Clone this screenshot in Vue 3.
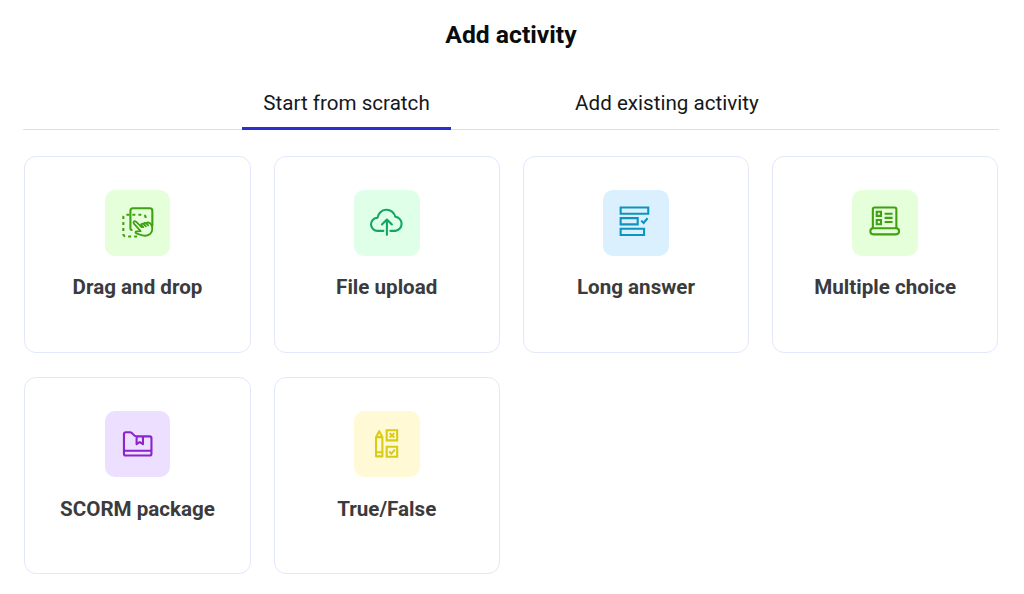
<template>
  <div class="add-activity">
    <h1 class="title">Add activity</h1>

    <div class="tabs" role="tablist">
      <button
        v-for="tab in tabs"
        :key="tab.id"
        class="tab"
        :class="{ active: activeTab === tab.id }"
        role="tab"
        @click="activeTab = tab.id"
      >
        {{ tab.label }}
      </button>
    </div>

    <div class="activity-grid">
      <div v-for="activity in activities" :key="activity.id" class="activity-card">
        <div class="activity-icon" :class="activity.id">
          <svg viewBox="0 0 66 66" fill="none" stroke="currentColor" stroke-width="2.1">
            <g v-if="activity.id === 'drag-drop'" stroke-linecap="round" stroke-linejoin="round">
              <path d="M26.7 40.1a1.5 1.5 0 0 1-1.2-1.5V20.8a2.5 2.5 0 0 1 2.5-2.5h17a2.5 2.5 0 0 1 2.5 2.5v15" />
              <path stroke-linecap="butt" stroke-dasharray="3 3" d="M40.7 28v-.8a2.3 2.3 0 0 0-2.3-2.3H20.7a2.3 2.3 0 0 0-2.3 2.3v17.2a2.3 2.3 0 0 0 2.3 2.3H34" />
              <path stroke-width="1.8" d="M36.7 37.2l-5.6-5.4c-1.6-1.4-3.4.5-2.1 2l6.8 7.5-4.1.1c-1.5.1-1.5 1.8-.2 2.2 3.3 1.1 6.1 2.4 9.1 2.3 4.1-.1 6.9-3.2 6.8-7.1 0-2.8-1.6-5.3-3.5-6.1-1.2-.5-2.3.1-2.2 1.1-1-1.4-3-1.1-3.1.5-1-1-2.4-.4-2.4.9zM36.6 35.2l1.8 2M39 34.3l2 2.1M41.7 33.8l1.6 1.7" />
            </g>
            <g v-else-if="activity.id === 'file-upload'" stroke-linecap="round" stroke-linejoin="round">
              <path d="M29.5 41H23.7A6.6 6.6 0 0 1 23.6 27.8A9.1 9.1 0 0 1 41.5 26.9A7.1 7.1 0 0 1 41.5 41H36.5" />
              <path d="M33 45V30.2M28 34.6l5-5 5 5" />
            </g>
            <g v-else-if="activity.id === 'long-answer'">
              <path d="M17.7 17.5h27.7v6.3H17.7zM17.7 28.2h17.1v6.3H17.7zM17.7 38.8h23.5v6.3H17.7z" />
              <path d="M38.4 30.7l2.3 2.4 4-4.8" />
            </g>
            <g v-else-if="activity.id === 'multiple-choice'" stroke-linejoin="round">
              <path d="M20.9 38V19.3a1.8 1.8 0 0 1 1.8-1.8h20a1.8 1.8 0 0 1 1.8 1.8V38" />
              <rect x="18.4" y="38.4" width="28.8" height="6.1" rx="3" />
              <path stroke-linejoin="miter" d="M24.8 21.8h4.3V26h-4.3zM24.8 30.1h4.3v4.2h-4.3zM32.7 23.9h8M32.7 28h8M32.7 32.1h8" />
            </g>
            <g v-else-if="activity.id === 'scorm'" stroke-linejoin="round">
              <path d="M19 42.8V23.3a2 2 0 0 1 2-2h4.2c2.7 0 3.1 4.2 6.5 4.2h13.1a1.8 1.8 0 0 1 1.8 1.8v15.5a1.8 1.8 0 0 1-1.8 1.8h-24a1.8 1.8 0 0 1-1.8-1.8zM19 39.9h27.6M31.7 25.5v7.8l3.1-2.2 3.3 2.2v-7.8" />
            </g>
            <g v-else>
              <path stroke-linejoin="round" d="M22.1 26.2l3.2-6 3.2 6v19.3h-6.4zM22.1 26.2h6.4M22.1 41.4h6.4" />
              <path d="M32.8 19.3h10.5v10.2H32.8zM32.8 35.9h10.5v10H32.8z" />
              <path stroke-width="2" d="M35.8 22.2l4.6 4.4M40.4 22.2l-4.6 4.4M35.3 40.6l2.2 2.2 3.5-4" />
            </g>
          </svg>
        </div>
        <span class="activity-name">{{ activity.name }}</span>
      </div>
    </div>
  </div>
</template>

<script setup>
import { ref } from 'vue'

const activeTab = ref('scratch')

const tabs = [
  { id: 'scratch', label: 'Start from scratch' },
  { id: 'existing', label: 'Add existing activity' }
]

const activities = [
  { id: 'drag-drop', name: 'Drag and drop' },
  { id: 'file-upload', name: 'File upload' },
  { id: 'long-answer', name: 'Long answer' },
  { id: 'multiple-choice', name: 'Multiple choice' },
  { id: 'scorm', name: 'SCORM package' },
  { id: 'true-false', name: 'True/False' }
]
</script>

<style>
body {
  background: #fff;
}
</style>

<style scoped>
.add-activity {
  box-sizing: border-box;
  height: 594px;
  padding: 19px 25px 0 23px;
  font-family: Roboto, sans-serif;
}

.title {
  margin: 0;
  text-align: center;
  font-size: 24.7px;
  line-height: 32px;
  font-weight: 700;
  color: #0b0c0f;
}

.tabs {
  display: flex;
  justify-content: center;
  gap: 103.6px;
  height: 53px;
  margin-top: 25px;
  border-bottom: 1px solid #dcdfe8;
}

.tab {
  box-sizing: border-box;
  height: 54px;
  padding: 2px 20.9px 0;
  background: none;
  border: none;
  border-bottom: 3px solid transparent;
  font-family: inherit;
  font-size: 20.6px;
  color: #15171a;
  cursor: pointer;
}

.tab.active {
  border-bottom-color: #2a2fd0;
}

.activity-grid {
  display: grid;
  grid-template-columns: repeat(4, 1fr);
  grid-auto-rows: 196.6px;
  gap: 24.9px 23px;
  margin: 26px 0.7px 0 1.4px;
}

.activity-card {
  box-sizing: border-box;
  display: flex;
  flex-direction: column;
  align-items: center;
  padding-top: 33px;
  border: 1px solid #e3e7fb;
  border-radius: 12px;
}

.activity-icon {
  width: 65.8px;
  height: 66px;
  border-radius: 10px;
}

.activity-icon svg {
  display: block;
}

.activity-name {
  margin-top: 17.4px;
  font-size: 20.6px;
  line-height: 28px;
  font-weight: 700;
  color: #3b3b3e;
}

.drag-drop,
.multiple-choice {
  background: #e6ffdb;
  color: #3fa010;
}

.file-upload {
  background: #dfffe8;
  color: #12a663;
}

.long-answer {
  background: #daf0ff;
  color: #0d94bd;
}

.scorm {
  background: #eddfff;
  color: #8a25cc;
}

.true-false {
  background: #fff9d5;
  color: #d8cc16;
}
</style>
